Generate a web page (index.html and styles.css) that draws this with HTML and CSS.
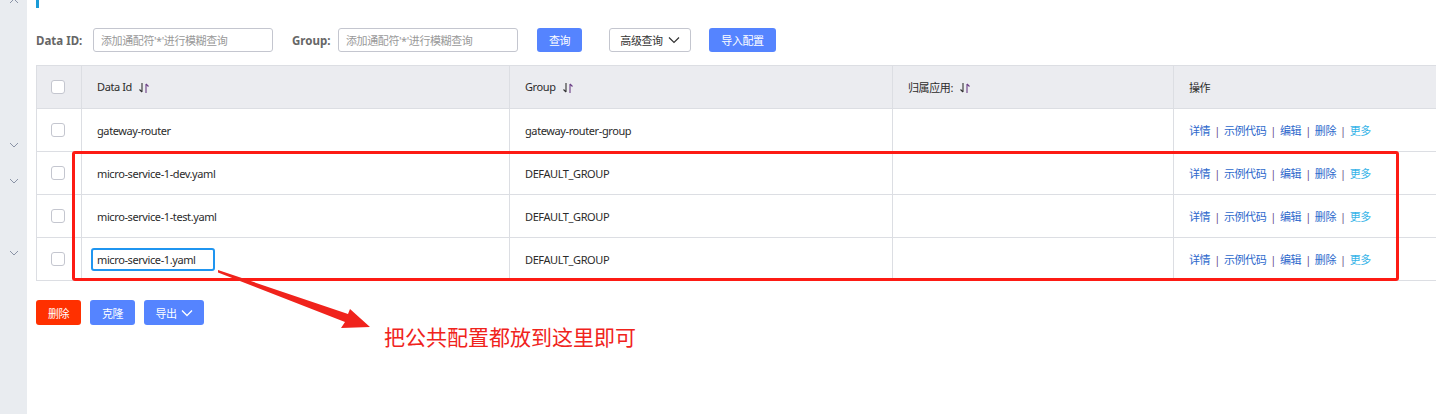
FILE: index.html
```html
<!DOCTYPE html>
<html lang="zh-CN">
<head>
<meta charset="utf-8">
<link rel="stylesheet" href="styles.css">
</head>
<body>
<div class="page">
  <aside class="sidebar">
    <svg class="chev chev-up" width="10" height="6" viewBox="0 0 10 6"><polyline points="1,5 5,1 9,5" fill="none" stroke="#8a93a6" stroke-width="1"/></svg>
    <svg class="chev c1" width="10" height="6" viewBox="0 0 10 6"><polyline points="1,1 5,5 9,1" fill="none" stroke="#8a93a6" stroke-width="1"/></svg>
    <svg class="chev c2" width="10" height="6" viewBox="0 0 10 6"><polyline points="1,1 5,5 9,1" fill="none" stroke="#8a93a6" stroke-width="1"/></svg>
    <svg class="chev c3" width="10" height="6" viewBox="0 0 10 6"><polyline points="1,1 5,5 9,1" fill="none" stroke="#8a93a6" stroke-width="1"/></svg>
  </aside>
  <main class="main">
    <div class="titlebar">
      <span class="title">配置管理 | public_public</span>
      <span class="subtitle">查询结果：共查询到 4 条满足要求的配置。</span>
    </div>
    <form class="search">
      <label class="lbl">Data ID:</label>
      <input class="inp" placeholder="添加通配符'*'进行模糊查询">
      <label class="lbl lbl-group">Group:</label>
      <input class="inp" placeholder="添加通配符'*'进行模糊查询">
      <button type="button" class="btn btn-primary btn-query">查询</button>
      <button type="button" class="btn btn-normal btn-adv">高级查询<svg width="12" height="8" viewBox="0 0 12 8"><polyline points="1,1.5 6,6.5 11,1.5" fill="none" stroke="#333" stroke-width="1.2"/></svg></button>
      <button type="button" class="btn btn-primary btn-import">导入配置</button>
    </form>
    <div class="tablewrap">
      <table class="tbl">
        <colgroup><col class="w-chk"><col class="w-id"><col class="w-grp"><col class="w-app"><col class="w-op"></colgroup>
        <thead>
          <tr>
            <th><span class="chk"></span></th>
            <th>Data Id <span class="sort"><svg width="12" height="12" viewBox="0 0 12 12"><path d="M4 1v9M4 10L1.5 7.5" fill="none" stroke="#333" stroke-width="1.1"/><path d="M8 11V2M8 2l2.5 2.5" fill="none" stroke="#6b3f86" stroke-width="1.1"/></svg></span></th>
            <th>Group <span class="sort"><svg width="12" height="12" viewBox="0 0 12 12"><path d="M4 1v9M4 10L1.5 7.5" fill="none" stroke="#333" stroke-width="1.1"/><path d="M8 11V2M8 2l2.5 2.5" fill="none" stroke="#6b3f86" stroke-width="1.1"/></svg></span></th>
            <th>归属应用: <span class="sort"><svg width="12" height="12" viewBox="0 0 12 12"><path d="M4 1v9M4 10L1.5 7.5" fill="none" stroke="#333" stroke-width="1.1"/><path d="M8 11V2M8 2l2.5 2.5" fill="none" stroke="#6b3f86" stroke-width="1.1"/></svg></span></th>
            <th>操作</th>
          </tr>
        </thead>
        <tbody>
          <tr>
            <td><span class="chk"></span></td>
            <td>gateway-router</td>
            <td>gateway-router-group</td>
            <td></td>
            <td class="ops"><a>详情</a><i>|</i><a>示例代码</a><i>|</i><a>编辑</a><i>|</i><a>删除</a><i>|</i><a class="more">更多</a></td>
          </tr>
          <tr>
            <td><span class="chk"></span></td>
            <td>micro-service-1-dev.yaml</td>
            <td>DEFAULT_GROUP</td>
            <td></td>
            <td class="ops"><a>详情</a><i>|</i><a>示例代码</a><i>|</i><a>编辑</a><i>|</i><a>删除</a><i>|</i><a class="more">更多</a></td>
          </tr>
          <tr>
            <td><span class="chk"></span></td>
            <td>micro-service-1-test.yaml</td>
            <td>DEFAULT_GROUP</td>
            <td></td>
            <td class="ops"><a>详情</a><i>|</i><a>示例代码</a><i>|</i><a>编辑</a><i>|</i><a>删除</a><i>|</i><a class="more">更多</a></td>
          </tr>
          <tr>
            <td><span class="chk"></span></td>
            <td><span class="hl">micro-service-1.yaml</span></td>
            <td>DEFAULT_GROUP</td>
            <td></td>
            <td class="ops"><a>详情</a><i>|</i><a>示例代码</a><i>|</i><a>编辑</a><i>|</i><a>删除</a><i>|</i><a class="more">更多</a></td>
          </tr>
        </tbody>
      </table>
      <div class="redbox"></div>
      <svg class="arrow" width="170" height="70" viewBox="0 0 170 70"><polygon points="0,1 130,45 132,40 152,58 123,59 127,53 -1,3" fill="#f0231c"/></svg>
      <div class="note">把公共配置都放到这里即可</div>
    </div>
    <div class="footer">
      <button type="button" class="btn btn-danger">删除</button>
      <button type="button" class="btn btn-primary">克隆</button>
      <button type="button" class="btn btn-primary btn-export">导出<svg width="12" height="8" viewBox="0 0 12 8"><polyline points="1,1.5 6,6.5 11,1.5" fill="none" stroke="#fff" stroke-width="1.3"/></svg></button>
    </div>
  </main>
</div>
</body>
</html>
```
FILE: styles.css
```css
* { box-sizing: border-box; }
html, body { margin: 0; padding: 0; background: #fff; }
body {
  font-family: "Noto Sans", "Noto Sans CJK SC", sans-serif;
  font-size: 11px;
  letter-spacing: -0.4px;
  color: #333;
  width: 1436px;
  height: 414px;
  overflow: hidden;
}
.page { display: flex; height: 414px; }
.sidebar {
  width: 27px;
  flex: none;
  background: #e9ecf0;
  position: relative;
}
.chev { position: absolute; left: 9px; }
.chev-up { top: -2px; }
.c1 { top: 142px; }
.c2 { top: 178px; }
.c3 { top: 250px; }
.main { flex: 1; padding-left: 9px; overflow: hidden; position: relative; }

.titlebar {
  height: 8px;
  overflow: hidden;
  border-left: 3px solid #1a9bd7;
  display: flex;
  align-items: flex-end;
}
.title {
  margin-left: 9px;
  font-size: 16px;
  font-weight: bold;
  color: #222;
  line-height: 20px;
  margin-bottom: 8px;
}
.subtitle {
  margin-left: 250px;
  font-size: 12px;
  color: #aaa;
  line-height: 16px;
  margin-bottom: 6px;
}

.search {
  margin: 20px 0 0;
  display: flex;
  align-items: center;
  height: 24px;
}
.lbl { font-weight: bold; color: #666; font-size: 11.5px; letter-spacing: 0; width: 57px; white-space: nowrap; }
.lbl-group { width: 46px; margin-left: 19px; }
.inp {
  width: 180px;
  height: 24px;
  border: 1px solid #c4c6cf;
  border-radius: 3px;
  padding: 0 7px;
  font: inherit;
  letter-spacing: -0.4px;
  color: #333;
}
.inp::placeholder { color: #999; }
.btn {
  height: 24px;
  border-radius: 3px;
  border: 1px solid transparent;
  font: inherit;
  letter-spacing: -0.4px;
  padding: 0;
  display: inline-flex;
  align-items: center;
  justify-content: center;
  white-space: nowrap;
  gap: 5px;
  cursor: pointer;
}
.btn-primary { background: #5584ff; color: #fff; }
.btn-normal { background: #fff; border-color: #c4c6cf; color: #333; }
.btn-danger { background: #ff3000; color: #fff; }
.btn-query { margin-left: 19px; width: 45px; }
.btn-adv { margin-left: 27px; width: 82px; }
.btn-import { margin-left: 18px; width: 67px; }

.tablewrap { position: relative; margin-top: 13px; }
.tbl {
  border-collapse: collapse;
  width: 1440px;
  table-layout: fixed;
}
.w-chk { width: 45px; }
.w-id { width: 428px; }
.w-grp { width: 383px; }
.w-app { width: 281px; }
.w-op { width: 303px; }
.tbl th, .tbl td {
  border: 1px solid #dcdee3;
  text-align: left;
  padding: 0 0 0 15px;
  font-weight: normal;
  color: #2b2b2b;
  white-space: nowrap;
}
.tbl th { background: #ebecf0; height: 43px; }
.tbl td { height: 43px; }
.tbl th:first-child, .tbl td:first-child { padding: 0 0 0 14px; }
.chk {
  display: block;
  width: 14px;
  height: 14px;
  border: 1px solid #c4c6cf;
  border-radius: 3px;
  background: #fff;
}
.sort { display: inline-block; vertical-align: middle; margin-left: 4px; position: relative; top: -1px; }
.sort svg { display: block; }
.ops a { color: #2c68cc; }
.ops .more { color: #36b4e8; }
.ops i { font-style: normal; color: #6b4e8c; margin: 0 4px; }
.hl {
  display: inline-block;
  border: 2px solid #1f95f0;
  border-radius: 3px;
  padding: 2px 17px 2px 4px;
  margin-left: -6px;
}

.redbox {
  position: absolute;
  left: 36px;
  top: 86px;
  width: 1327px;
  height: 130px;
  border: 3px solid #fd1b14;
  border-radius: 3px;
  pointer-events: none;
}
.arrow { position: absolute; left: 182px; top: 204px; }
.note {
  position: absolute;
  left: 348px;
  top: 259px;
  color: #f0231c;
  font-size: 21px;
  letter-spacing: 0;
  line-height: 26px;
}

.footer { margin-top: 19px; display: flex; gap: 9px; }
.footer .btn { height: 25px; width: 45px; }
.footer .btn-export { width: 60px; gap: 4px; }
```
